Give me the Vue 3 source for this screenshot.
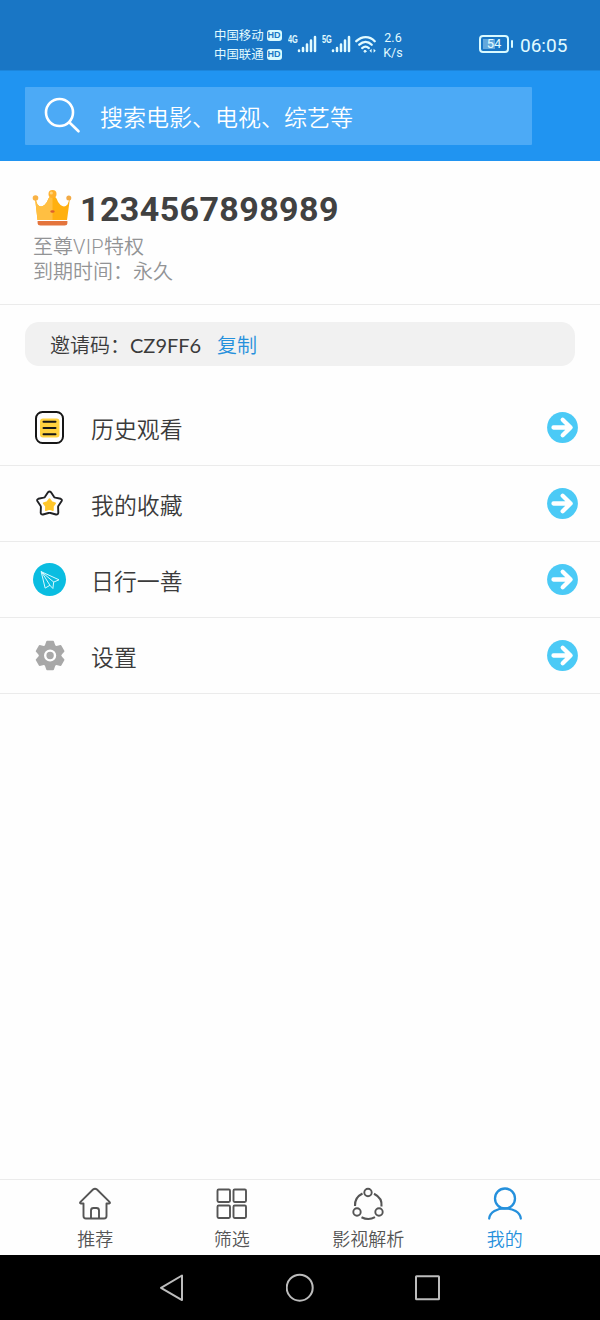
<script setup>
const menu = [
  { id: 'history', label: '历史观看' },
  { id: 'favorite', label: '我的收藏' },
  { id: 'donate', label: '日行一善' },
  { id: 'settings', label: '设置' }
]
const tabs = [
  { id: 'home', label: '推荐' },
  { id: 'filter', label: '筛选' },
  { id: 'parse', label: '影视解析' },
  { id: 'mine', label: '我的', active: true }
]
const networks = ['4G', '5G']
const teeth = [0, 60, 120, 180, 240, 300]
</script>

<template>
  <div class="phone">
    <header class="status">
      <div class="carriers">
        <div v-for="c in ['中国移动', '中国联通']" :key="c" class="carrier">
          <span>{{ c }}</span><b class="hd">HD</b>
        </div>
      </div>
      <div v-for="n in networks" :key="n" class="signal">
        <b>{{ n }}</b>
        <svg width="20" height="18" viewBox="0 0 20 18" stroke="#e2fbff" stroke-width="2.5" stroke-linecap="round">
          <path d="M2 15.5v.5M6 13v3M10 9.5V16M14 5.500V16M18 2v14" />
        </svg>
      </div>
      <svg class="wifi" width="22" height="20" viewBox="0 0 22 20" fill="none" stroke="#e2fbff" stroke-width="2.300" stroke-linecap="round">
        <path d="M1.300 6.200C7 .700 14.500.700 19.700 6.200M4.300 9.700C8.200 6 13 6 16.700 9.700M7.200 13.100c2-1.800 4.600-1.800 6.600 0" />
        <circle cx="10" cy="16.300" r="1" fill="#e2fbff" stroke-width="1" />
        <path d="M16.600 13.800v4l-2.200-2zM18.600 13.800v4l2.200-2z" fill="#e2fbff" stroke="none" />
      </svg>
      <div class="speed"><span>2.6</span><span>K/s</span></div>
      <div class="battery"><div class="cell"><span>54</span></div><i></i></div>
      <div class="clock">06:05</div>
    </header>

    <div class="header">
      <div class="search">
        <svg width="38" height="38" viewBox="0 0 38 38" fill="none" stroke="#fff" stroke-width="2.600" stroke-linecap="round">
          <circle cx="15.500" cy="15.500" r="13.500" /><path d="M25.500 25.500l9 8.800" />
        </svg>
        <span>搜索电影、电视、综艺等</span>
      </div>
    </div>

    <section class="profile">
      <div class="user">
        <svg width="40" height="38" viewBox="0 0 40 38">
          <path d="M3 9l2.500 22h29.500L38 9l-2.500 6.500q-3 3.500-7 .5-3-3-4-6.500L20.500 5l-4 4.500q-1 3.500-4 6.500-4 3-7-.5z" fill="#ffb010" />
          <path d="M3 9l2.500 22h15V5l-4 4.500q-1 3.500-4 6.500-4 3-7-.5z" fill="#ffbf42" />
          <path d="M5.600 32h29.800v2q0 2.500-3 2.500H8.600q-3 0-3-2.500z" fill="#e4743c" />
          <circle cx="3.500" cy="9" r="2.800" fill="#f9b244" /><circle cx="20.500" cy="5" r="4" fill="#ffb02c" /><circle cx="36.800" cy="9" r="2.500" fill="#f2aa45" />
          <circle cx="19.300" cy="4" r="1.600" fill="#ffd57b" />
          <ellipse cx="20.500" cy="22.500" rx="2.200" ry="1.200" fill="#de602d" />
        </svg>
        <strong>1234567898989</strong>
      </div>
      <p>至尊<span class="latin">VIP</span>特权<br>到期时间：永久</p>
    </section>

    <div class="invite"><span>邀请码：</span><span class="code">CZ9FF6</span><a>复制</a></div>

    <ul class="menu">
      <li v-for="item in menu" :key="item.id">
        <svg class="lead" width="34" height="34" viewBox="0 0 34 34" fill="none" stroke-linecap="round" stroke-linejoin="round">
          <g v-if="item.id === 'history'" stroke="#161616" stroke-width="2">
            <rect x="3" y="1" width="27" height="31" rx="6.500" />
            <rect x="7" y="7.500" width="19.500" height="19" rx="3" fill="#ffd23f" stroke="none" />
            <path d="M10.500 10.700h12M10.500 17h12M10.500 23.200h12" />
          </g>
          <g v-else-if="item.id === 'favorite'" stroke="#202124" stroke-width="1.900">
            <path d="M15 5.200q1.500-1.300 3 0l3 4.600q.5.600 1.300.8l5.400 1.200q1.800.8.800 2.500l-3 4.400q-.5.700-.4 1.600l.2 5.600q-.4 2-2.300 1.600l-5.500-1.500q-1-.2-2 0L10 27.500q-1.900.4-2.300-1.600l.2-5.600q.1-.9-.4-1.600l-3-4.400q-1-1.700.8-2.500l5.400-1.200q.8-.2 1.300-.8z" />
            <path d="M16.500 12l2.200 3 3.500 1.200-2.200 3.100v3.900L16.500 22l-3.700 1.200.1-3.900-2.300-3.100 3.600-1.200z" fill="#ffc629" stroke="#ffc629" stroke-width="1.500" />
          </g>
          <g v-else-if="item.id === 'donate'">
            <circle cx="16.500" cy="16.500" r="16.500" fill="#0abde1" />
            <path d="M8.500 8.800L26 16.800l-5.300 2.300-.8 6.400-3-3.200-4.400 2.600zM8.500 8.800l8.400 13.500M8.500 8.800l12.200 10.300" stroke="#d8faff" stroke-width="1" />
          </g>
          <g v-else transform="translate(17.100 16.500)">
            <path v-for="a in teeth" :key="a" :transform="`rotate(${a})`" d="M-4.300-10l1.300-3.800h6L4.300-10z" fill="#a8a8a8" stroke="#a8a8a8" stroke-width="1.800" />
            <circle r="11.300" fill="#a8a8a8" />
            <circle r="4.900" stroke="#fff" stroke-width="2.400" />
          </g>
        </svg>
        <span>{{ item.label }}</span>
        <svg class="go" width="31" height="31" viewBox="0 0 31 31" fill="none">
          <circle cx="15.500" cy="15.500" r="15.400" fill="#4bcaf6" />
          <path d="M6.500 15.500h17M15.700 7.800l7.900 7.700-7.900 7.700" stroke="#fff" stroke-width="4.300" stroke-linecap="round" stroke-linejoin="round" />
        </svg>
      </li>
    </ul>

    <nav class="tabs">
      <div v-for="t in tabs" :key="t.id" class="tab" :class="{ active: t.active }">
        <svg width="36" height="36" viewBox="0 0 36 36" fill="none" stroke="currentColor" stroke-width="1.900" stroke-linecap="round" stroke-linejoin="round">
          <path v-if="t.id === 'home'" d="M6.500 17.500H4q-1.700-.4-.5-1.600L16 3.500q2-1.700 4 0l12.500 12.400q1.200 1.200-.5 1.600h-2.500V30q0 2.500-2.500 2.500H9Q6.500 32.500 6.500 30zM14 32V24.500q0-2.500 2.500-2.500h3q2.500 0 2.500 2.500V32" />
          <g v-else-if="t.id === 'filter'">
            <rect x="3.500" y="3.500" width="12.500" height="12.500" rx="1.200" /><rect x="19.500" y="3.500" width="12.500" height="12.500" rx="1.200" />
            <rect x="3.500" y="19.500" width="12.500" height="12.500" rx="1.200" /><rect x="19.500" y="19.500" width="12.500" height="12.500" rx="1.200" />
          </g>
          <g v-else-if="t.id === 'parse'" transform="translate(0 -.5)">
            <circle cx="18" cy="7" r="3.700" /><circle cx="7" cy="26.500" r="3.700" /><circle cx="29" cy="26.500" r="3.700" />
            <path d="M12.500 8Q4.500 12 5 20.500M24 8.200Q32.500 12.500 31.500 21M11.500 31.700q7 3.500 13.500 0" stroke-width="2.100" stroke-linecap="butt" />
          </g>
          <g v-else stroke-width="2.300"><circle cx="18" cy="12.500" r="10" /><path d="M2.200 32.500c1-13.500 30.600-13.500 31.600 0" /></g>
        </svg>
        <span>{{ t.label }}</span>
      </div>
    </nav>

    <footer class="system">
      <svg width="28" height="30" viewBox="0 0 28 30"><path d="M3 14.800L24 2.500v24.600z" /></svg>
      <svg width="28" height="30" viewBox="0 0 28 30"><circle cx="13.700" cy="14.700" r="13" /></svg>
      <svg width="28" height="30" viewBox="0 0 28 30"><rect x="2" y="3.300" width="23" height="23" rx=".5" /></svg>
    </footer>
  </div>
</template>

<style>
body { margin: 0; }
</style>

<style scoped>
.phone { width: 600px; height: 1320px; overflow: hidden; display: flex; flex-direction: column; background: #fefefe; color: #3b3b3b; font-family: "Noto Sans CJK SC", sans-serif; font-weight: 350; }
svg { display: block; flex: none; }
.phone span { white-space: nowrap; }
.status { height: 70px; flex: none; box-sizing: border-box; padding: 25px 33px 0 214px; background: #1976c5; color: #e2fbff; display: flex; align-items: flex-start; }
.carriers { width: 74px; flex: none; padding-top: 1px; font-weight: 400; }
.carrier { height: 19px; display: flex; align-items: center; gap: 3px; font-size: 12.400px; line-height: 19px; }
.hd { width: 15px; height: 11px; border-radius: 3px; background: #d9faff; color: #1976c5; font: 700 9px/11px "Liberation Sans", sans-serif; text-align: center; }
.signal { width: 34px; flex: none; display: flex; padding-top: 10px; }
.signal b { width: 10px; margin-right: -1px; font: 700 10px/10px "Liberation Sans", sans-serif; transform: scaleX(.74); transform-origin: left; }
.wifi { margin-top: 10px; margin-left: -1px; }
.speed { width: 30px; margin-left: 1px; padding-top: 5px; display: flex; flex-direction: column; align-items: center; font: 12.500px/15px Roboto, sans-serif; }
.battery { margin-left: auto; display: flex; align-items: center; gap: 2px; padding-top: 10px; }
.cell { width: 26px; height: 14px; border: 2px solid #d9faff; border-radius: 4px; background: linear-gradient(90deg, #63a8dc 54%, transparent 54%) 2px 2px / 22px 10px no-repeat; display: flex; justify-content: center; font: 13px/14px Roboto, sans-serif; }
.battery i { width: 2px; height: 8px; background: #d9faff; border-radius: 1px; }
.clock { margin-left: 7px; padding-top: 9px; width: 47px; font: 19px/23px Roboto, sans-serif; }
.header { height: 91px; flex: none; box-sizing: border-box; padding: 16px 0 0 25px; background: #2094f1; border-top: 1px solid #1c86dc; }
.search { width: 507px; height: 58px; border-radius: 1px; background: #4caaf6; color: #fff; display: flex; align-items: center; }
.search svg { margin-left: 19px; margin-right: 18px; }
.search span { font-size: 23px; line-height: 36px; }
.profile { height: 143px; flex: none; border-bottom: 1px solid #ebebeb; padding: 0 33px; }
.user { height: 74px; display: flex; align-items: flex-start; padding-top: 13px; box-sizing: border-box; margin-left: -1px; }
.user svg { margin-top: 15px; }
.user strong { margin-left: 8px; margin-top: 15px; font: 700 34px/40px Roboto, sans-serif; letter-spacing: .4px; color: #414141; }
.profile p { margin: 0; font-size: 20px; line-height: 24px; color: #929395; font-weight: 350; margin-top: -1px; }
.latin { font-family: Roboto, sans-serif; font-weight: 300; letter-spacing: .3px; }
.invite { width: 550px; height: 44px; flex: none; box-sizing: border-box; margin: 17px 25px 0; padding-left: 25px; padding-top: 2px; border-radius: 14px; background: #f1f1f1; display: flex; align-items: center; font-size: 20px; line-height: 28px; }
.code { font-family: Lato, sans-serif; font-weight: 400; font-size: 20px; letter-spacing: 0; width: 71px; }
.invite a { color: #2590dc; margin-left: 16px; }
.menu { list-style: none; margin: 24px 0 0; padding: 0; }
.menu li { height: 76px; box-sizing: border-box; padding: 0 22px 0 33px; border-bottom: 1px solid #ebebeb; display: flex; align-items: center; }
.menu span { margin-left: 24px; font-size: 22.900px; line-height: 34px; }
.go { margin-left: auto; }
.tabs { height: 76px; flex: none; box-sizing: border-box; margin-top: auto; padding: 6px 27px 0; border-top: 1px solid #ebebeb; display: grid; grid-template-columns: repeat(4, 1fr); }
.tab { display: flex; flex-direction: column; align-items: center; color: #555; }
.tab span { font-size: 18px; line-height: 26px; margin-top: 3px; }
.tab.active { color: #2590dc; }
.system { height: 65px; flex: none; background: #000; display: flex; justify-content: center; align-items: center; gap: 100px; }
.system svg { fill: none; stroke: #bcbcbc; stroke-width: 2; stroke-linejoin: round; }
</style>
